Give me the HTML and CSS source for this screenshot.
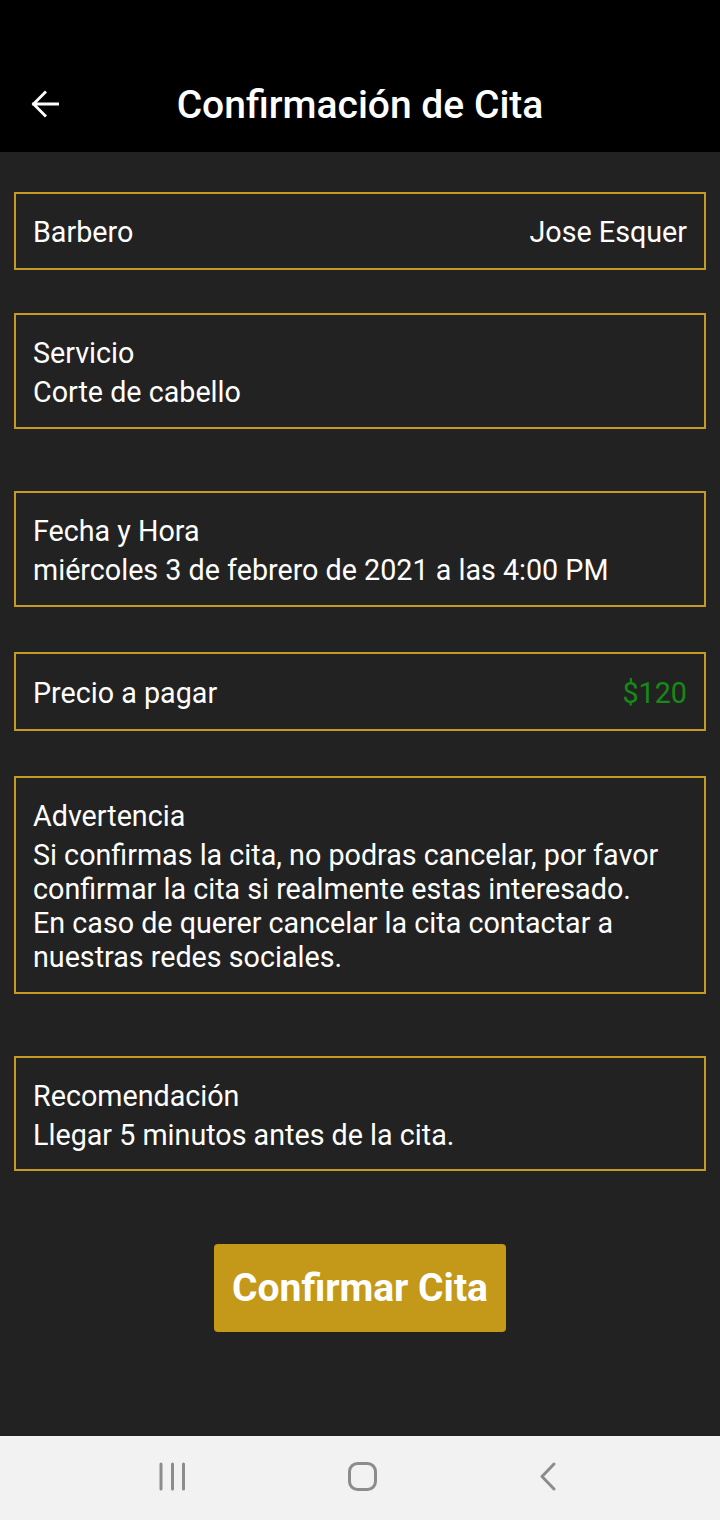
FILE: index.html
```html
<!DOCTYPE html>
<html lang="es">
<head>
<meta charset="utf-8">
<title>Confirmación de Cita</title>
<link rel="stylesheet" href="styles.css">
</head>
<body>
<div class="screen">
  <header class="appbar">
    <svg class="back" width="28" height="28" viewBox="0 0 28 28"><path d="M27 14H2.5M14 2.5L2.5 14 14 25.5" fill="none" stroke="#fff" stroke-width="2.8" stroke-linecap="square"/></svg>
    <h1 class="title">Confirmación de Cita</h1>
  </header>
  <main class="content">
    <div class="card row c1"><span>Barbero</span><span>Jose Esquer</span></div>
    <div class="card c2"><div class="label">Servicio</div><div class="value">Corte de cabello</div></div>
    <div class="card c3"><div class="label">Fecha y Hora</div><div class="value">miércoles 3 de febrero de 2021 a las 4:00 PM</div></div>
    <div class="card row c4"><span>Precio a pagar</span><span class="price">$120</span></div>
    <div class="card c5"><div class="label">Advertencia</div><div class="value">Si confirmas la cita, no podras cancelar, por favor confirmar la cita si realmente estas interesado.<br>En caso de querer cancelar la cita contactar a nuestras redes sociales.</div></div>
    <div class="card c6"><div class="label">Recomendación</div><div class="value">Llegar 5 minutos antes de la cita.</div></div>
    <div class="btnwrap"><button class="confirm">Confirmar Cita</button></div>
  </main>
  <nav class="navbar">
    <svg width="28" height="30" viewBox="0 0 28 30"><g stroke="#8c8c8c" stroke-width="3" stroke-linecap="round"><line x1="2" y1="2" x2="2" y2="27"/><line x1="13.5" y1="2" x2="13.5" y2="27"/><line x1="24.5" y1="2" x2="24.5" y2="27"/></g></svg>
    <svg width="30" height="30" viewBox="0 0 30 30"><rect x="1.5" y="1.5" width="26" height="26" rx="8" fill="none" stroke="#8c8c8c" stroke-width="3"/></svg>
    <svg width="18" height="30" viewBox="0 0 18 30"><path d="M15 2 L3 14.5 L15 27" fill="none" stroke="#8c8c8c" stroke-width="3" stroke-linecap="round" stroke-linejoin="round"/></svg>
  </nav>
</div>
</body>
</html>
```

FILE: styles.css
```css
* { box-sizing: border-box; }
html, body { margin: 0; padding: 0; }
body {
  background: #222222;
  font-family: Roboto, "Noto Sans", sans-serif;
  color: #ffffff;
}
.screen {
  width: 720px;
  height: 1520px;
  display: flex;
  flex-direction: column;
  background: #222222;
}
.appbar {
  height: 152px;
  background: #000000;
  display: flex;
  align-items: center;
  padding-top: 58px;
  position: relative;
}
.back {
  position: absolute;
  left: 31px;
  top: 90px;
}
.title {
  margin: 0;
  width: 100%;
  text-align: center;
  font-size: 39px;
  font-weight: 500;
  color: #ffffff;
  line-height: 94px;
}
.content {
  flex: 1;
  padding: 40px 14px 0 14px;
  display: flex;
  flex-direction: column;
}
.card {
  border: 2px solid #c49a25;
  padding: 21px 17px 18px 17px;
  font-size: 28.7px;
  line-height: 34px;
}
.card.row {
  display: flex;
  justify-content: space-between;
  padding-bottom: 19px;
}
.label { margin-bottom: 5px; }
.price { color: #168a16; }
.c2 { margin-top: 43px; }
.c3 { margin-top: 62px; }
.c4 { margin-top: 45px; padding-top: 22px; }
.c5 { margin-top: 45px; }
.c6 { margin-top: 62px; padding-bottom: 17px; }
.btnwrap {
  display: flex;
  justify-content: center;
  margin-top: 73px;
}
.confirm {
  width: 292px;
  height: 88px;
  border: none;
  border-radius: 4px;
  background: #c4991a;
  color: #ffffff;
  font-family: Roboto, sans-serif;
  font-weight: 700;
  font-size: 39px;
  padding: 0;
}
.navbar {
  height: 84px;
  background: #f2f2f2;
  display: flex;
  align-items: center;
  justify-content: space-between;
  padding: 0 163px 2px 159px;
}
```
